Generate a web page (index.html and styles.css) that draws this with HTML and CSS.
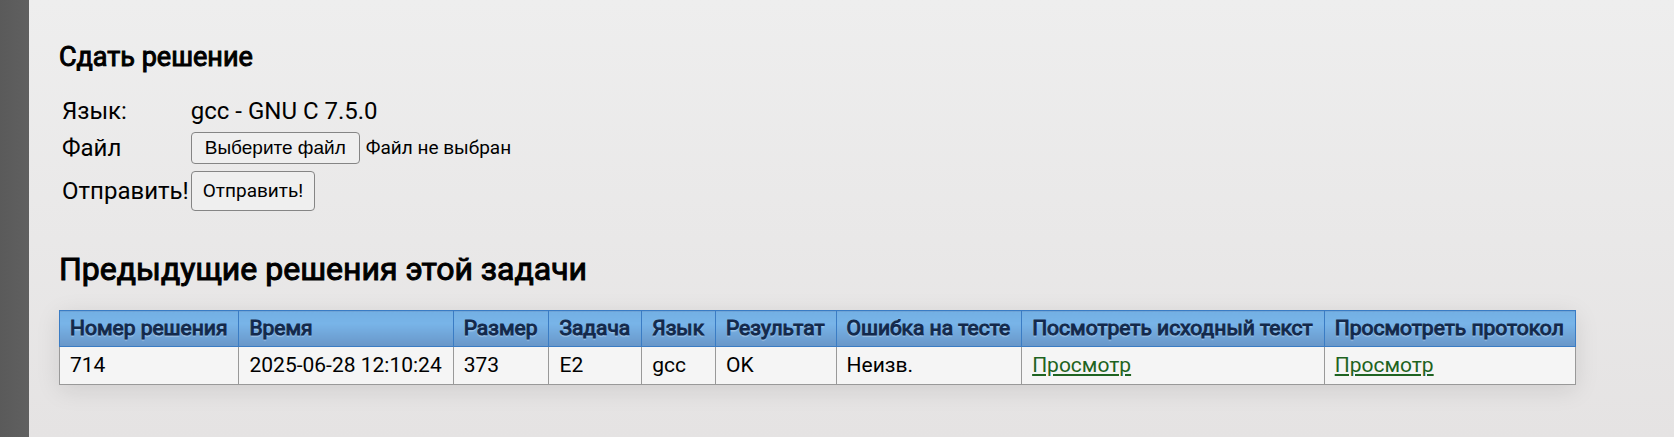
FILE: index.html
```html
<!DOCTYPE html>
<html lang="ru">
<head>
<meta charset="utf-8">
<meta name="viewport" content="width=device-width, initial-scale=1">
<title>Сдать решение</title>
<link rel="stylesheet" href="styles.css">
</head>
<body>
<div class="page">
  <main class="content">
    <h3 class="heading heading-submit">Сдать решение</h3>
    <form class="submit-form">
      <span>Язык:</span>
      <span>gcc - GNU C 7.5.0</span>
      <label for="file">Файл</label>
      <div class="file-field">
        <input class="file-input" type="file" id="file">
        <label class="file-button" for="file">Выберите файл</label>
        <span class="file-name">Файл не выбран</span>
      </div>
      <label for="send">Отправить!</label>
      <div class="send-field"><button class="send-button" type="submit" id="send">Отправить!</button></div>
    </form>
    <h2 class="heading heading-runs">Предыдущие решения этой задачи</h2>
    <table class="runs">
      <thead>
        <tr>
          <th>Номер решения</th><th>Время</th><th>Размер</th><th>Задача</th><th>Язык</th><th>Результат</th><th>Ошибка на тесте</th><th>Посмотреть исходный текст</th><th>Просмотреть протокол</th>
        </tr>
      </thead>
      <tbody>
        <tr>
          <td>714</td><td>2025-06-28 12:10:24</td><td>373</td><td>E2</td><td>gcc</td><td>OK</td><td>Неизв.</td><td><a class="view" href="#source">Просмотр</a></td><td><a class="view" href="#protocol">Просмотр</a></td>
        </tr>
      </tbody>
    </table>
  </main>
</div>
</body>
</html>
```

FILE: styles.css
```css
body {
  margin: 0;
  background: #5e5e5e;
  font-family: Roboto, "Liberation Sans", sans-serif;
  font-size: 24px;
  line-height: 28px;
  color: #000;
}

.page {
  display: flex;
  min-height: 100vh;
  padding-left: 29px;
  background: linear-gradient(to right, #5a5a5a, #606060 29px);
}

.content {
  flex: 1;
  padding: 40px 30px 20px;
  background: linear-gradient(#eeeeee, #e5e3e3);
}

.heading {
  margin: 0;
  font-weight: 400;
  -webkit-text-stroke: 1px #000;
}

.heading-submit {
  font-size: 27px;
  line-height: 34px;
}

.heading-runs {
  margin-top: 38px;
  font-size: 32px;
  line-height: 40px;
}

.submit-form {
  display: grid;
  grid-template-columns: max-content 1fr;
  column-gap: 2px;
  row-gap: 7px;
  align-items: center;
  margin-top: 23px;
  padding-left: 3px;
}

.file-field {
  display: flex;
  align-items: center;
  gap: 6px;
}

.file-input {
  position: absolute;
  width: 1px;
  height: 1px;
  opacity: 0;
}

.file-button,
.send-button {
  box-sizing: border-box;
  border: 1px solid #858585;
  border-radius: 4px;
  background: #efefef;
  color: #000;
  font-size: 19px;
  line-height: 24px;
}

.file-button {
  padding: 3px 13px;
  font-family: "Liberation Sans", Arial, sans-serif;
}

.file-name {
  font-size: 19px;
}

.send-field {
  display: flex;
}

.send-button {
  padding: 7px 11px;
  font-family: inherit;
}

.runs {
  margin-top: 21px;
  border-collapse: collapse;
  background: #f5f5f5;
  box-shadow: 0 5px 25px rgba(0, 0, 0, 0.1);
  font-size: 21px;
  line-height: 25px;
  white-space: nowrap;
}

.runs th,
.runs td {
  padding: 6px 11px 6px 10px;
  border: 1px solid #999;
  text-align: left;
}

.runs th {
  padding-top: 5px;
  padding-bottom: 5px;
  border-color: #3a7cc4;
  background: linear-gradient(#73b0e4, #78b4e8 35%, #6896c8);
  color: #13294b;
  font-weight: 400;
  -webkit-text-stroke: 1px #13294b;
  text-shadow: 0 2px 1px rgba(255, 255, 255, 0.3);
}

.view {
  color: #1e6321;
}
```
